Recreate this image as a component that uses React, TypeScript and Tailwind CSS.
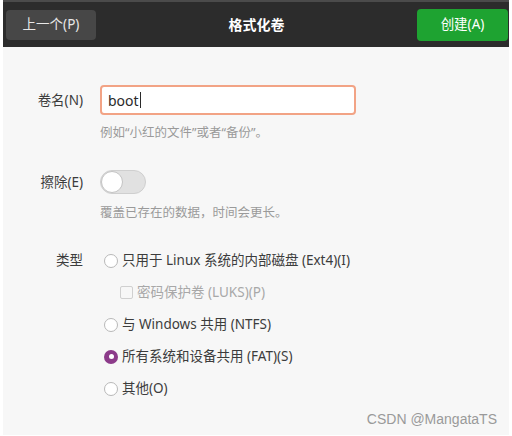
const font = { fontFamily: '"Noto Sans", "Noto Sans CJK SC", sans-serif' };

function Radio({ checked }: { checked?: boolean }) {
  if (checked) {
    return (
      <span className="flex h-[14px] w-[14px] shrink-0 items-center justify-center rounded-full bg-[#8c3b8a]">
        <span className="h-[5px] w-[5px] rounded-full bg-white" />
      </span>
    );
  }
  return <span className="h-[14px] w-[14px] shrink-0 rounded-full border border-[#b8b8b8] bg-white" />;
}

function Option({ label, checked }: { label: string; checked?: boolean }) {
  return (
    <div className="flex h-[18px] items-center gap-[4px] text-[13.5px] text-[#3c3c3c]">
      <Radio checked={checked} />
      <span>{label}</span>
    </div>
  );
}

export default function App() {
  return (
    <div className="h-[436px] w-[512px] overflow-hidden bg-white pl-[3px] pr-[3px]" style={font}>
      {/* Header bar */}
      <div className="flex h-[47px] items-center justify-between border-t-2 border-[#4b4b4b] bg-[#2c2c2c] pl-[3px] pr-[1px]">
        <button className="flex h-[30px] w-[90px] items-center justify-center rounded-[4px] bg-[#474747] text-[13.5px] text-[#e8e8e8]">
          上一个(P)
        </button>
        <div className="text-[14px] font-bold text-white">格式化卷</div>
        <button className="flex h-[32px] w-[91px] items-center justify-center rounded-[4px] bg-[#1ea331] text-[13.5px] text-white">
          创建(A)
        </button>
      </div>

      {/* Body */}
      <div className="h-[388px] bg-[#f7f7f7] pt-[38px]">
        {/* Volume name */}
        <div className="flex items-center">
          <div className="w-[80px] text-right text-[13.5px] text-[#3c3c3c]">卷名(N)</div>
          <div className="ml-[17px] flex h-[30px] w-[256px] items-center rounded-[4px] border-2 border-[#f2a385] bg-white pl-[6px] text-[14px] text-[#2a2a2a]">
            boot<span className="ml-px h-[16px] w-px bg-[#2a2a2a]" />
          </div>
        </div>
        <div className="ml-[97px] mt-[9px] text-[12.5px] text-[#9a9a9a]">例如“小红的文件”或者“备份”。</div>

        {/* Erase */}
        <div className="mt-[27px] flex items-center">
          <div className="w-[80px] text-right text-[13.5px] text-[#3c3c3c]">擦除(E)</div>
          <div className="ml-[17px] flex h-[24px] w-[46px] items-center rounded-full border border-[#cfcfcf] bg-[#e1e1e1]">
            <span className="h-[22px] w-[22px] rounded-full border border-[#c4c4c4] bg-white" />
          </div>
        </div>
        <div className="ml-[97px] mt-[10px] text-[12.5px] text-[#9a9a9a]">覆盖已存在的数据，时间会更长。</div>

        {/* Type */}
        <div className="mt-[29px] flex items-start">
          <div className="flex h-[18px] w-[80px] items-center justify-end text-[13.5px] text-[#3c3c3c]">类型</div>
          <div className="ml-[21px] flex flex-col gap-[14px]">
            <Option label="只用于 Linux 系统的内部磁盘 (Ext4)(I)" />
            <div className="ml-[16px] flex h-[18px] items-center gap-[4px] text-[13.5px] text-[#a8a8a8]">
              <span className="h-[13px] w-[13px] rounded-[2px] border border-[#d0d0d0] bg-[#f7f7f7]" />
              <span>密码保护卷 (LUKS)(P)</span>
            </div>
            <Option label="与 Windows 共用 (NTFS)" />
            <Option label="所有系统和设备共用 (FAT)(S)" checked />
            <Option label="其他(O)" />
          </div>
        </div>

        <div className="mr-[12px] mt-[11px] text-right text-[14px] text-[#9a9a9a]" style={{ fontFamily: '"Liberation Sans", sans-serif' }}>
          CSDN @MangataTS
        </div>
      </div>
    </div>
  );
}
